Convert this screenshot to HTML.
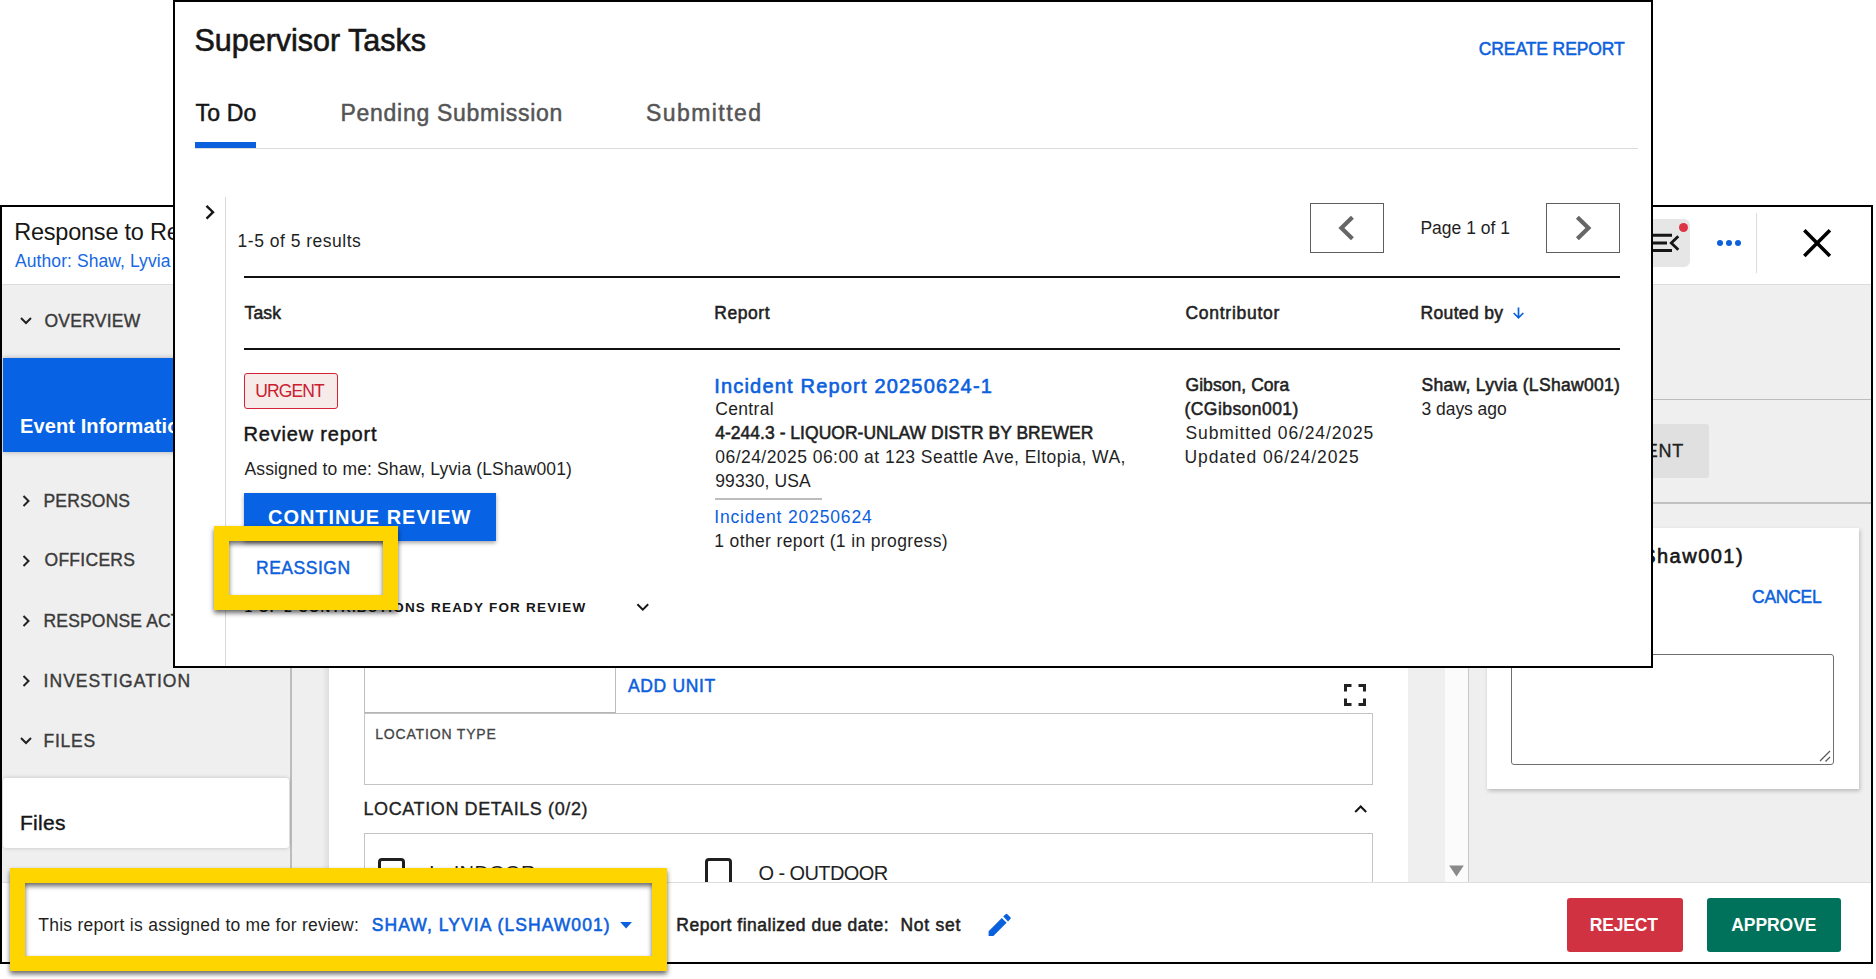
<!DOCTYPE html>
<html lang="en">
<head>
<meta charset="utf-8">
<title>Supervisor Tasks</title>
<style>
html,body{margin:0;padding:0;background:#fff;}
body{width:1876px;height:979px;position:relative;overflow:hidden;font-family:"Liberation Sans",sans-serif;}
.abs,.t,svg.i{position:absolute;}
.t{white-space:nowrap;line-height:1;}
.page{position:absolute;width:1876px;height:979px;}
/* ---------- back panel (report view) ---------- */
#back{position:absolute;left:0;top:205px;width:1869px;height:755px;border:2px solid #000;background:#efefef;overflow:hidden;}
#back .page{left:-2px;top:-207px;}
#hdr{left:2px;top:207px;width:1869px;height:77px;background:#fff;border-bottom:1px solid #dcdcdc;}
#side{left:2px;top:285px;width:288px;height:597px;background:#efefef;border-right:2px solid #bdbdbd;}
#navsel{left:3px;top:358px;width:286px;height:94px;background:#0762e4;box-shadow:0 0 5px rgba(0,0,0,.28);}
#filescard{left:3px;top:778px;width:286px;height:70px;background:#fff;border-radius:3px;box-shadow:0 0 4px rgba(0,0,0,.2);}
#gutter{left:292px;top:285px;width:37px;height:597px;background:linear-gradient(to right,#efefef 0,#efefef 30px,#dedede 37px);}
#main{left:329px;top:284px;width:1079px;height:598px;background:#fff;overflow:hidden;}
#main .page{left:-329px;top:-284px;}
#unitinput{left:364px;top:640px;width:250px;height:71px;border:1px solid #bdbdbd;border-bottom:2px solid #b5b5b5;}
#loctype{left:364px;top:713px;width:1007px;height:70px;border:1px solid #c4c4c4;}
#locdet{left:364px;top:833px;width:1007px;height:90px;border:1px solid #c4c4c4;}
.cb{top:858px;width:21px;height:30px;border:3px solid #1f1f1f;border-radius:4px;}
#scrollgap{left:1408px;top:284px;width:37px;height:598px;background:#efefef;}
#scrolltrack{left:1445px;top:284px;width:23px;height:598px;background:#fbfbfb;border-right:1px solid #c8c8c8;}
#rline1{left:1469px;top:399px;width:402px;height:1px;background:#bcbcbc;}
#rline2{left:1469px;top:502px;width:402px;height:2px;background:#c0c0c0;}
#cmtbtn{left:1560px;top:424px;width:149px;height:54px;background:#e0e0e0;border-radius:3px;}
#rcard{left:1487px;top:528px;width:372px;height:261px;background:#fff;box-shadow:1px 2px 4px rgba(0,0,0,.22);}
#ta{left:1511px;top:654px;width:321px;height:109px;border:1px solid #6f6f6f;border-radius:3px;background:#fff;}
#hbtn{left:1630px;top:219px;width:60px;height:48px;background:#e6e6e6;border-radius:6px;}
#reddot{left:1679px;top:223px;width:9px;height:9px;border-radius:50%;background:#dc3545;}
#hdiv{left:1756px;top:213px;width:1px;height:60px;background:#dcdcdc;}
#foot{left:2px;top:882px;width:1869px;height:80px;background:#fff;border-top:1px solid #dedede;box-sizing:border-box;}
#reject{left:1567px;top:898px;width:116px;height:54px;background:#d13241;border-radius:3px;}
#approve{left:1707px;top:898px;width:134px;height:54px;background:#00715a;border-radius:3px;}
/* ---------- top panel (supervisor tasks) ---------- */
#top{position:absolute;left:173px;top:0;width:1476px;height:664px;border:2px solid #000;background:#fff;overflow:hidden;}
#top .page{left:-175px;top:-2px;}
#tabline{left:195px;top:148px;width:1443px;height:1px;background:#dcdcdc;}
#tabsel{left:195px;top:142px;width:61px;height:6px;background:#0b60dd;}
#vline{left:225px;top:197px;width:1px;height:470px;background:#d9d9d9;}
.pg{top:203px;width:72px;height:48px;border:1px solid #5e5e5e;}
.rule{left:244px;width:1376px;height:2px;background:#111;}
#urgent{left:244px;top:373px;width:92px;height:34px;border:1px solid #d6213a;border-radius:3px;background:#f7ebe9;}
#contbtn{left:244px;top:493px;width:252px;height:48px;background:#0762e4;box-shadow:0 2px 4px rgba(0,0,0,.35);}
#shortrule{left:715px;top:498px;width:107px;height:2px;background:#bdbdbd;}
/* ---------- highlight boxes ---------- */
.hl{position:absolute;border:15px solid #ffd500;box-sizing:border-box;filter:drop-shadow(0 3px 2.5px rgba(0,0,0,.6));}
#hl1{left:214px;top:526px;width:184px;height:84px;}
#hl2{left:10px;top:868px;width:657px;height:103px;}
</style>
</head>
<body>

<!-- ================= BACK PANEL ================= -->
<div id="back"><div class="page">
  <div id="hdr" class="abs"></div>
  <div id="hbtn" class="abs"></div>
  <svg class="i" style="left:1640px;top:230px" width="42" height="26" viewBox="0 0 42 26"><path d="M0 5.3H32M0 13H27M0 20.5H32" stroke="#161616" stroke-width="3" fill="none"/><path d="M38.3 6.3L31.3 13L38.3 19.7" stroke="#161616" stroke-width="2.8" fill="none"/></svg>
  <div id="reddot" class="abs"></div>
  <svg class="i" style="left:1714px;top:238px" width="30" height="10" viewBox="0 0 30 10"><circle cx="6" cy="5" r="3" fill="#0b60dd"/><circle cx="15" cy="5" r="3" fill="#0b60dd"/><circle cx="24" cy="5" r="3" fill="#0b60dd"/></svg>
  <div id="hdiv" class="abs"></div>
  <svg class="i" style="left:1800px;top:226px" width="34" height="34" viewBox="0 0 34 34"><path d="M4.3 4.3L29.9 29.9M29.9 4.3L4.3 29.9" stroke="#000" stroke-width="3.6" fill="none"/></svg>

  <div id="side" class="abs"></div>
  <div id="navsel" class="abs"></div>
  <div id="filescard" class="abs"></div>
  <!-- nav chevrons -->
  <svg class="i" style="left:19px;top:315px" width="14" height="12" viewBox="0 0 14 12"><path d="M2 3L7 8L12 3" stroke="#222" stroke-width="2" fill="none"/></svg>
  <svg class="i" style="left:20px;top:494px" width="12" height="14" viewBox="0 0 12 14"><path d="M3.5 2L8.5 7L3.5 12" stroke="#222" stroke-width="2" fill="none"/></svg>
  <svg class="i" style="left:20px;top:554px" width="12" height="14" viewBox="0 0 12 14"><path d="M3.5 2L8.5 7L3.5 12" stroke="#222" stroke-width="2" fill="none"/></svg>
  <svg class="i" style="left:20px;top:614px" width="12" height="14" viewBox="0 0 12 14"><path d="M3.5 2L8.5 7L3.5 12" stroke="#222" stroke-width="2" fill="none"/></svg>
  <svg class="i" style="left:20px;top:674px" width="12" height="14" viewBox="0 0 12 14"><path d="M3.5 2L8.5 7L3.5 12" stroke="#222" stroke-width="2" fill="none"/></svg>
  <svg class="i" style="left:19px;top:735px" width="14" height="12" viewBox="0 0 14 12"><path d="M2 3L7 8L12 3" stroke="#222" stroke-width="2" fill="none"/></svg>

  <div id="gutter" class="abs"></div>
  <div id="main" class="abs"><div class="page">
    <div id="unitinput" class="abs"></div>
    <svg class="i" style="left:1343.5px;top:683.5px" width="22" height="22" viewBox="0 0 22 22"><path d="M1.5 7.5V1.5H7.5M14.5 1.5H20.5V7.5M20.5 14.5V20.5H14.5M7.5 20.5H1.5V14.5" stroke="#222" stroke-width="3" fill="none"/></svg>
    <div id="loctype" class="abs"></div>
    <svg class="i" style="left:1353px;top:803px" width="16" height="12" viewBox="0 0 16 12"><path d="M2.2 9L7.7 3.5L13.2 9" stroke="#161616" stroke-width="2" fill="none"/></svg>
    <div id="locdet" class="abs"></div>
    <div class="abs cb" style="left:378px"></div>
    <div class="abs cb" style="left:705px"></div>
  </div></div>
  <div id="scrollgap" class="abs"></div>
  <div id="scrolltrack" class="abs"></div>
  <svg class="i" style="left:1448px;top:864px" width="18" height="14" viewBox="0 0 18 14"><path d="M1.2 1.4H15.8L8.5 12.6Z" fill="#8a8a8a"/></svg>
  <div id="rline1" class="abs"></div>
  <div id="rline2" class="abs"></div>
  <div id="cmtbtn" class="abs"></div>
  <div id="rcard" class="abs"></div>
  <div id="ta" class="abs"></div>
  <svg class="i" style="left:1818px;top:749px" width="14" height="14" viewBox="0 0 14 14"><path d="M2 12L12 2M7.5 12.5L12 8" stroke="#555" stroke-width="1.2" fill="none"/></svg>

  <div id="foot" class="abs"></div>
  <svg class="i" style="left:619px;top:921px" width="14" height="9" viewBox="0 0 14 9"><path d="M1.2 1H13L7.1 7.6Z" fill="#0b60dd"/></svg>
  <svg class="i" style="left:987px;top:912px" width="26" height="26" viewBox="0 0 26 26"><path d="M1.6 19.2V24H6.4L19.6 10.8L14.8 6ZM16.2 4.6L21 9.4L23.4 7Q24.2 6.1 23.4 5.2L20.4 2.2Q19.5 1.4 18.6 2.2Z" fill="#0b60dd"/></svg>
  <div id="reject" class="abs"></div>
  <div id="approve" class="abs"></div>
<span class="t" style="left:14.20px;top:221.00px;font-size:23.5px;letter-spacing:-0.223px;color:#161616;">Response to Resistance</span>
<span class="t" style="left:15.00px;top:253.00px;font-size:17.5px;letter-spacing:0.081px;color:#1668e3;">Author: Shaw, Lyvia (LShaw001)</span>
<span class="t" style="left:44.50px;top:313.00px;font-size:17.5px;letter-spacing:0.252px;color:#3a3a3a;-webkit-text-stroke:0.4px #3a3a3a;">OVERVIEW</span>
<span class="t" style="left:20.00px;top:416.00px;font-size:20px;letter-spacing:0.106px;color:#ffffff;font-weight:700;">Event Information</span>
<span class="t" style="left:43.50px;top:493.00px;font-size:17.5px;letter-spacing:0.141px;color:#3a3a3a;-webkit-text-stroke:0.4px #3a3a3a;">PERSONS</span>
<span class="t" style="left:44.50px;top:552.00px;font-size:17.5px;letter-spacing:0.278px;color:#3a3a3a;-webkit-text-stroke:0.4px #3a3a3a;">OFFICERS</span>
<span class="t" style="left:43.50px;top:613.00px;font-size:17.5px;letter-spacing:0.172px;color:#3a3a3a;-webkit-text-stroke:0.4px #3a3a3a;">RESPONSE ACTIONS</span>
<span class="t" style="left:43.50px;top:673.00px;font-size:17.5px;letter-spacing:1.065px;color:#3a3a3a;-webkit-text-stroke:0.4px #3a3a3a;">INVESTIGATION</span>
<span class="t" style="left:43.50px;top:733.00px;font-size:17.5px;letter-spacing:0.761px;color:#3a3a3a;-webkit-text-stroke:0.4px #3a3a3a;">FILES</span>
<span class="t" style="left:20.00px;top:812.00px;font-size:21px;letter-spacing:0.291px;color:#161616;-webkit-text-stroke:0.4px #161616;">Files</span>
<span class="t" style="left:628.00px;top:678.00px;font-size:17.5px;letter-spacing:0.650px;color:#0b60dd;-webkit-text-stroke:0.5px #0b60dd;">ADD UNIT</span>
<span class="t" style="left:375.25px;top:727.00px;font-size:14px;letter-spacing:0.821px;color:#444444;-webkit-text-stroke:0.3px #444444;">LOCATION TYPE</span>
<span class="t" style="left:363.50px;top:800.00px;font-size:18px;letter-spacing:0.601px;color:#222222;-webkit-text-stroke:0.35px #222222;">LOCATION DETAILS (0/2)</span>
<span class="t" style="left:429.00px;top:863.00px;font-size:20px;letter-spacing:0.346px;color:#222222;">I - INDOOR</span>
<span class="t" style="left:758.50px;top:863.00px;font-size:20px;letter-spacing:-0.585px;color:#222222;">O - OUTDOOR</span>
<span class="t" style="left:1585.75px;top:442.00px;font-size:18px;letter-spacing:0.751px;color:#222222;-webkit-text-stroke:0.35px #222222;">COMMENT</span>
<span class="t" style="left:1491.98px;top:546.00px;font-size:20px;letter-spacing:1.490px;color:#161616;-webkit-text-stroke:0.6px #161616;">Shaw, Lyvia (LShaw001)</span>
<span class="t" style="left:1752.00px;top:589.00px;font-size:17.5px;letter-spacing:-0.252px;color:#0b60dd;-webkit-text-stroke:0.45px #0b60dd;">CANCEL</span>
<span class="t" style="left:38.25px;top:917.00px;font-size:17.5px;letter-spacing:0.259px;color:#1f1f1f;">This report is assigned to me for review:</span>
<span class="t" style="left:371.75px;top:917.00px;font-size:17.5px;letter-spacing:1.077px;color:#0b60dd;-webkit-text-stroke:0.55px #0b60dd;">SHAW, LYVIA (LSHAW001)</span>
<span class="t" style="left:676.25px;top:917.00px;font-size:17.5px;letter-spacing:0.517px;color:#1f1f1f;-webkit-text-stroke:0.55px #1f1f1f;">Report finalized due date:</span>
<span class="t" style="left:900.50px;top:917.00px;font-size:17.5px;letter-spacing:0.737px;color:#1f1f1f;-webkit-text-stroke:0.55px #1f1f1f;">Not set</span>
<span class="t" style="left:1589.75px;top:917.00px;font-size:17.5px;letter-spacing:-0.171px;color:#ffffff;font-weight:700;">REJECT</span>
<span class="t" style="left:1731.25px;top:917.00px;font-size:17.5px;letter-spacing:-0.068px;color:#ffffff;font-weight:700;">APPROVE</span>
</div></div>

<!-- ================= TOP PANEL ================= -->
<div id="top"><div class="page">
  <div id="tabline" class="abs"></div>
  <div id="tabsel" class="abs"></div>
  <div id="vline" class="abs"></div>
  <svg class="i" style="left:203px;top:203px" width="14" height="18" viewBox="0 0 14 18"><path d="M3.5 2.8L10 9.2L3.5 15.6" stroke="#161616" stroke-width="2.4" fill="none"/></svg>
  <div class="abs pg" style="left:1310px"></div>
  <svg class="i" style="left:1336px;top:214px" width="20" height="28" viewBox="0 0 20 28"><path d="M16.4 3.2L5.4 14L16.4 24.8" stroke="#666" stroke-width="4.2" fill="none"/></svg>
  <div class="abs pg" style="left:1546px"></div>
  <svg class="i" style="left:1573px;top:214px" width="20" height="28" viewBox="0 0 20 28"><path d="M4.4 3.2L15.4 14L4.4 24.8" stroke="#666" stroke-width="4.2" fill="none"/></svg>
  <div class="abs rule" style="top:276px"></div>
  <div class="abs rule" style="top:348px"></div>
  <svg class="i" style="left:1511px;top:306px" width="15" height="14" viewBox="0 0 15 14"><path d="M7.5 1.5V11.5M2.7 7L7.5 11.8L12.3 7" stroke="#0b60dd" stroke-width="1.7" fill="none"/></svg>
  <div id="urgent" class="abs"></div>
  <div id="contbtn" class="abs"></div>
  <div id="shortrule" class="abs"></div>
  <svg class="i" style="left:635px;top:601px" width="16" height="12" viewBox="0 0 16 12"><path d="M2.4 3.2L7.8 8.6L13.2 3.2" stroke="#161616" stroke-width="2" fill="none"/></svg>
<span class="t" style="left:194.50px;top:25.00px;font-size:30.5px;letter-spacing:-0.015px;color:#161616;-webkit-text-stroke:0.6px #161616;">Supervisor Tasks</span>
<span class="t" style="left:1478.75px;top:41.00px;font-size:17.5px;letter-spacing:-0.101px;color:#0b60dd;-webkit-text-stroke:0.5px #0b60dd;">CREATE REPORT</span>
<span class="t" style="left:195.50px;top:102.00px;font-size:23px;letter-spacing:0.177px;color:#161616;-webkit-text-stroke:0.5px #161616;">To Do</span>
<span class="t" style="left:340.50px;top:102.00px;font-size:23px;letter-spacing:0.712px;color:#555555;-webkit-text-stroke:0.5px #555555;">Pending Submission</span>
<span class="t" style="left:646.00px;top:102.00px;font-size:23px;letter-spacing:1.436px;color:#555555;-webkit-text-stroke:0.5px #555555;">Submitted</span>
<span class="t" style="left:237.60px;top:233.00px;font-size:17.5px;letter-spacing:0.493px;color:#1f1f1f;">1-5 of 5 results</span>
<span class="t" style="left:1420.40px;top:220.00px;font-size:17.5px;letter-spacing:0.012px;color:#1f1f1f;">Page 1 of 1</span>
<span class="t" style="left:244.50px;top:305.00px;font-size:17.5px;letter-spacing:0.172px;color:#1f1f1f;-webkit-text-stroke:0.55px #1f1f1f;">Task</span>
<span class="t" style="left:714.25px;top:305.00px;font-size:17.5px;letter-spacing:0.567px;color:#1f1f1f;-webkit-text-stroke:0.55px #1f1f1f;">Report</span>
<span class="t" style="left:1185.50px;top:305.00px;font-size:17.5px;letter-spacing:0.726px;color:#1f1f1f;-webkit-text-stroke:0.55px #1f1f1f;">Contributor</span>
<span class="t" style="left:1420.50px;top:305.00px;font-size:17.5px;letter-spacing:0.341px;color:#1f1f1f;-webkit-text-stroke:0.55px #1f1f1f;">Routed by</span>
<span class="t" style="left:255.25px;top:383.00px;font-size:17.5px;letter-spacing:-0.890px;color:#c9202f;">URGENT</span>
<span class="t" style="left:243.50px;top:424.00px;font-size:20px;letter-spacing:0.806px;color:#161616;-webkit-text-stroke:0.45px #161616;">Review report</span>
<span class="t" style="left:244.50px;top:461.00px;font-size:17.5px;letter-spacing:0.136px;color:#1f1f1f;">Assigned to me: Shaw, Lyvia (LShaw001)</span>
<span class="t" style="left:268.00px;top:507.00px;font-size:20px;letter-spacing:0.963px;color:#ffffff;font-weight:700;">CONTINUE REVIEW</span>
<span class="t" style="left:256.00px;top:560.00px;font-size:17.5px;letter-spacing:0.528px;color:#0b60dd;-webkit-text-stroke:0.45px #0b60dd;">REASSIGN</span>
<span class="t" style="left:244.50px;top:601.00px;font-size:13.5px;letter-spacing:1.201px;color:#161616;font-weight:700;">1 OF 2 CONTRIBUTIONS READY FOR REVIEW</span>
<span class="t" style="left:714.25px;top:376.00px;font-size:20px;letter-spacing:1.187px;color:#0b60dd;-webkit-text-stroke:0.6px #0b60dd;">Incident Report 20250624-1</span>
<span class="t" style="left:715.25px;top:401.00px;font-size:17.5px;letter-spacing:0.329px;color:#1f1f1f;">Central</span>
<span class="t" style="left:715.25px;top:425.00px;font-size:17.5px;letter-spacing:0.021px;color:#1f1f1f;-webkit-text-stroke:0.55px #1f1f1f;">4-244.3 - LIQUOR-UNLAW DISTR BY BREWER</span>
<span class="t" style="left:715.25px;top:449.00px;font-size:17.5px;letter-spacing:0.457px;color:#1f1f1f;">06/24/2025 06:00 at 123 Seattle Ave, Eltopia, WA,</span>
<span class="t" style="left:715.25px;top:473.00px;font-size:17.5px;letter-spacing:0.117px;color:#1f1f1f;">99330, USA</span>
<span class="t" style="left:714.25px;top:509.00px;font-size:17.5px;letter-spacing:0.842px;color:#0b60dd;">Incident 20250624</span>
<span class="t" style="left:714.25px;top:533.00px;font-size:17.5px;letter-spacing:0.365px;color:#1f1f1f;">1 other report (1 in progress)</span>
<span class="t" style="left:1185.50px;top:377.00px;font-size:17.5px;letter-spacing:0.057px;color:#1f1f1f;-webkit-text-stroke:0.55px #1f1f1f;">Gibson, Cora</span>
<span class="t" style="left:1184.50px;top:401.00px;font-size:17.5px;letter-spacing:0.444px;color:#1f1f1f;-webkit-text-stroke:0.55px #1f1f1f;">(CGibson001)</span>
<span class="t" style="left:1185.50px;top:425.00px;font-size:17.5px;letter-spacing:0.868px;color:#1f1f1f;">Submitted 06/24/2025</span>
<span class="t" style="left:1184.50px;top:449.00px;font-size:17.5px;letter-spacing:0.919px;color:#1f1f1f;">Updated 06/24/2025</span>
<span class="t" style="left:1421.50px;top:377.00px;font-size:17.5px;letter-spacing:0.303px;color:#1f1f1f;-webkit-text-stroke:0.55px #1f1f1f;">Shaw, Lyvia (LShaw001)</span>
<span class="t" style="left:1421.50px;top:401.00px;font-size:17.5px;letter-spacing:-0.043px;color:#1f1f1f;">3 days ago</span>
</div></div>

<!-- ================= HIGHLIGHTS ================= -->
<div id="hl1" class="hl"></div>
<div id="hl2" class="hl"></div>

</body>
</html>
